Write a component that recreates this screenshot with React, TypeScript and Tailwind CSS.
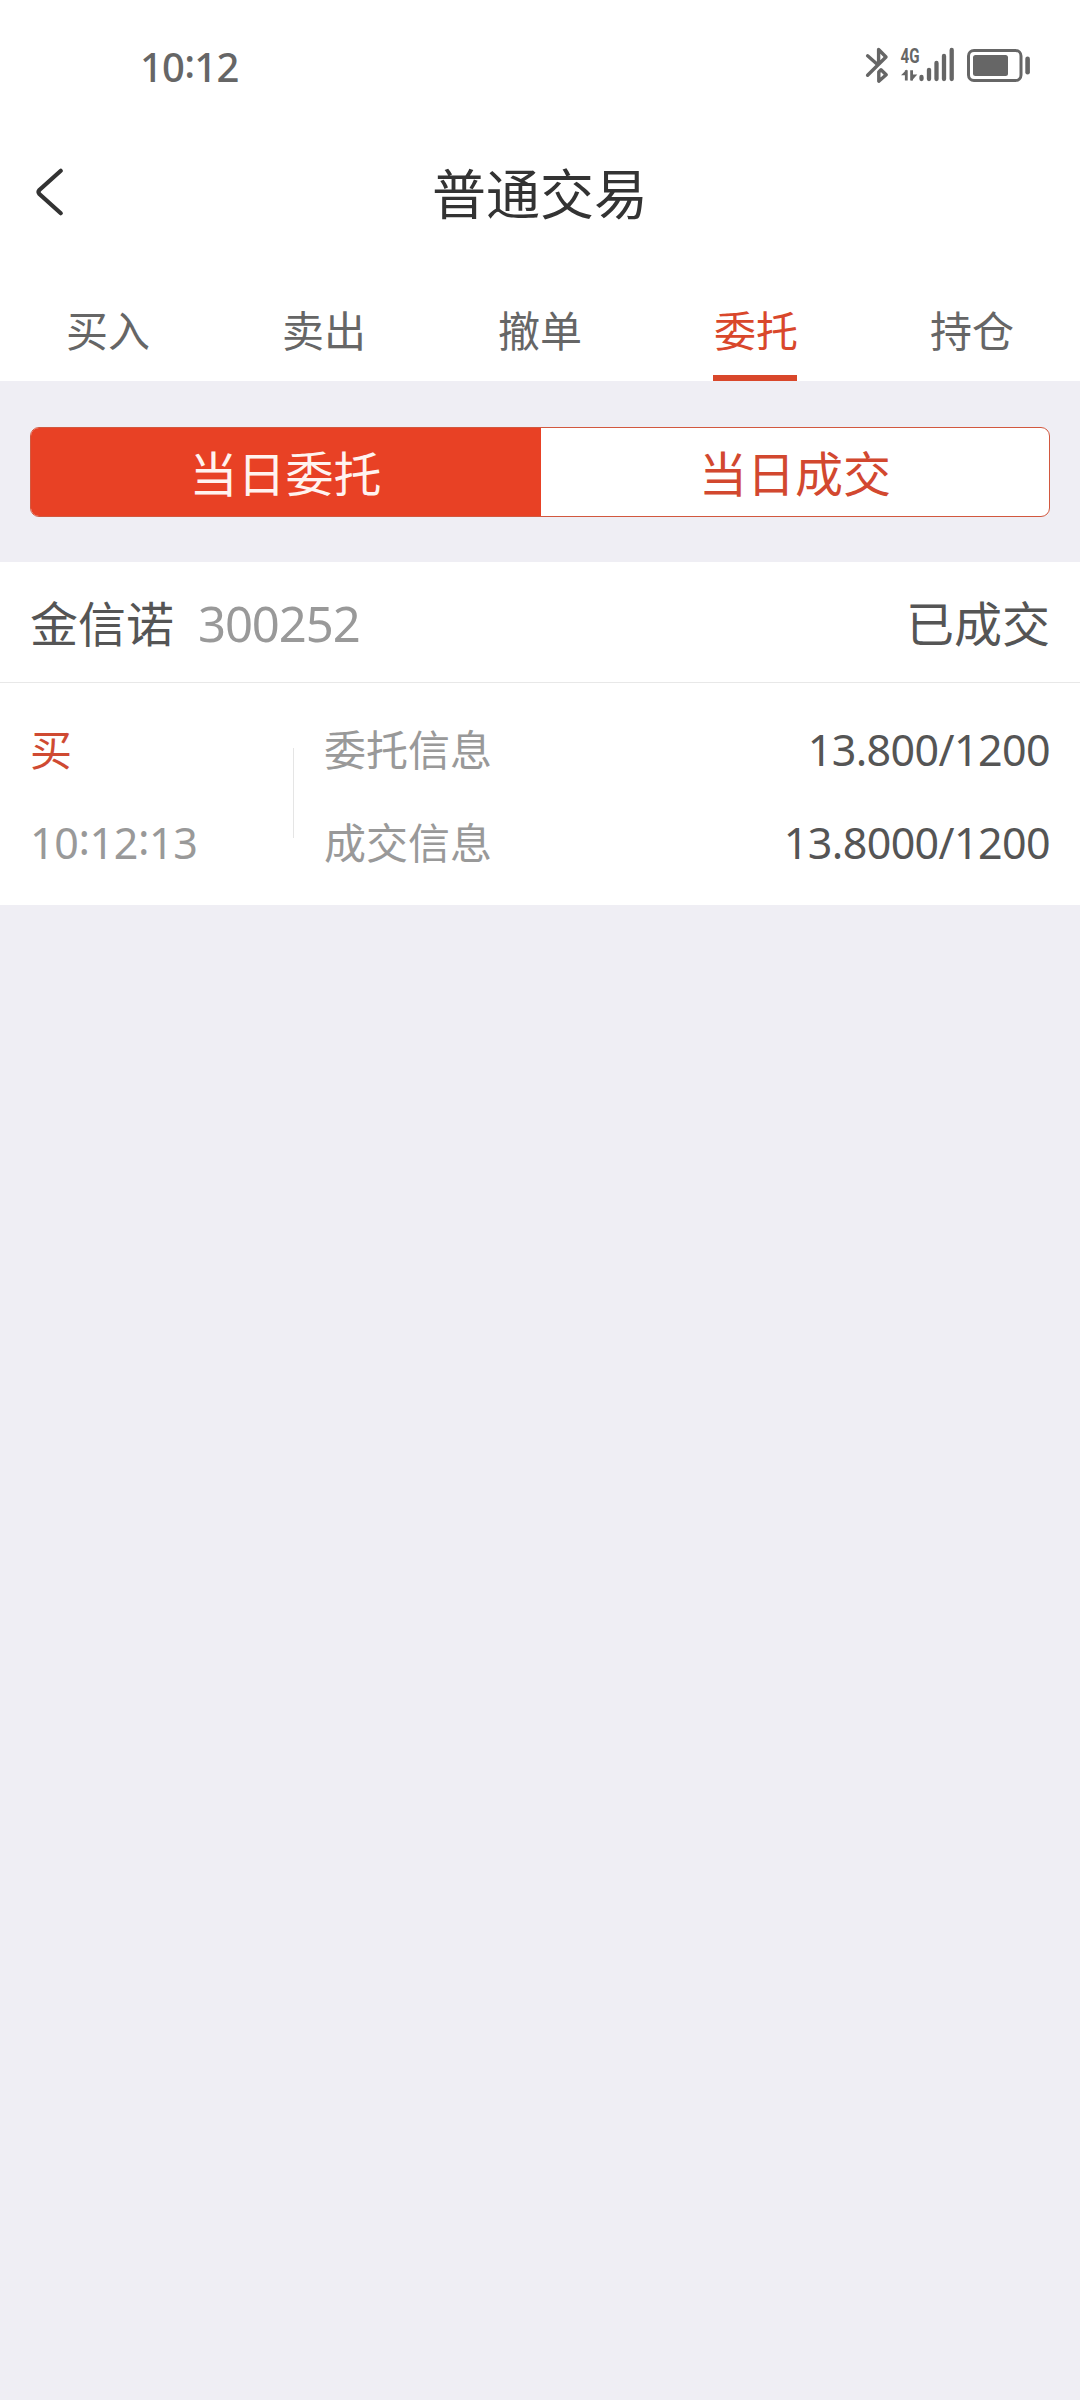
const tabs = ['买入', '卖出', '撤单', '委托', '持仓'];

const details = [
  { label: '委托信息', value: '13.800/1200' },
  { label: '成交信息', value: '13.8000/1200' },
];

/** Clock text with vertically centred colons. */
function Clock({ value, className }: { value: string; className: string }) {
  return (
    <span className={className}>
      {value.split('').map((c, i) =>
        c === ':' ? (
          <span key={i} className="relative -top-[0.09em]">
            :
          </span>
        ) : (
          c
        ),
      )}
    </span>
  );
}

function StatusIcons() {
  return (
    <svg width="172" height="44" viewBox="862 43 172 44" fill="none" stroke="#666" aria-hidden="true">
      <g strokeWidth="3.4" strokeLinecap="round" strokeLinejoin="round">
        <path d="M867.6 55.8 L877.5 64.5" />
        <path d="M867.6 75.2 L886 57 L878.6 49.5 V64" />
        <path d="M881 69.8 L886.2 74.8 L878.8 81.2 V72 Z" />
      </g>
      <text
        x="900.5"
        y="62.5"
        fill="#666"
        stroke="none"
        fontFamily="Roboto, sans-serif"
        fontWeight="700"
        fontSize="20.5"
        textLength="19"
        lengthAdjust="spacingAndGlyphs"
      >
        4G
      </text>
      <path d="M906.8 81 V69.5 L901 75.2 H906" fill="#666" stroke="none" />
      <path d="M906.3 80.6 V70.2 M911.6 70.2 V80.6" strokeWidth="2.8" />
      <path d="M911.5 81 V74.5 H917.3 Z" fill="#666" stroke="none" />
      <g strokeWidth="4.3" strokeLinecap="round">
        <path d="M921.5 77 V79" />
        <path d="M929 69.8 V79" />
        <path d="M936.5 63 V79" />
        <path d="M944 56 V79" />
        <path d="M951.7 50 V79" />
      </g>
      <rect x="968.5" y="50.5" width="52.5" height="30" rx="5.5" strokeWidth="3" />
      <rect x="973" y="55" width="35" height="21" rx="2.5" fill="#666" stroke="none" />
      <rect x="1025.3" y="56.5" width="4.6" height="18" rx="2.3" fill="#666" stroke="none" />
    </svg>
  );
}

export default function App() {
  return (
    <div
      lang="zh-CN"
      className="flex h-[2400px] w-[1080px] flex-col overflow-hidden bg-[#efeef4] font-['Noto_Sans_CJK_SC',sans-serif] whitespace-nowrap"
    >
      <header className="bg-white">
        <div className="flex h-[130px] items-center justify-between pr-[46px] pl-[140px]">
          <Clock
            value="10:12"
            className="pt-[4px] font-['Noto_Sans',sans-serif] text-[40px] leading-[60px] font-medium tracking-[-0.8px] text-[#666]"
          />
          <StatusIcons />
        </div>

        <div className="grid h-[122px] grid-cols-[1fr_auto_1fr] items-center">
          <svg className="mt-[2px] ml-[32px]" width="36" height="54" viewBox="32 165 36 54" fill="none" aria-hidden="true">
            <path
              d="M60.8 170.8 L39.4 190 Q37.6 192 39.4 194 L60.8 213.2"
              stroke="#333"
              strokeWidth="4.2"
              strokeLinecap="round"
            />
          </svg>
          <h1 className="pt-[2px] text-[54px] leading-[78px] text-[#333]">普通交易</h1>
        </div>

        <nav className="grid h-[129px] grid-cols-5">
          {tabs.map((tab) => (
            <div key={tab} className="flex flex-col items-center justify-between pt-[47px]">
              <span className={tab === '委托' ? 'text-[42px] leading-[60px] text-[#d9472b]' : 'text-[42px] leading-[60px] text-[#666]'}>
                {tab}
              </span>
              {tab === '委托' && <span className="mr-[2px] h-[6px] w-[84px] bg-[#d9472b]" />}
            </div>
          ))}
        </nav>
      </header>

      <div className="px-[30px] pt-[46px] pb-[45px]">
        <div className="grid h-[90px] grid-cols-2 overflow-hidden rounded-[9px] border border-[#d2583f] bg-white text-[48px] leading-[86px]">
          <div className="bg-[#e84125] text-center text-[#fff3f0]">当日委托</div>
          <div className="border-l border-[#e84125] text-center text-[#d2482f]">当日成交</div>
        </div>
      </div>

      <section className="bg-white">
        <div className="flex h-[121px] items-start justify-between border-b border-[#e8e8e8] px-[30px] pt-[24px] text-[48px] leading-[70px] text-[#555]">
          <div className="flex gap-[24px]">
            <span>金信诺</span>
            <span className="pt-[2px] font-['Noto_Sans',sans-serif] text-[49px] tracking-[-1.1px] text-[#999]">300252</span>
          </div>
          <span>已成交</span>
        </div>

        <div className="flex h-[222px] pt-[35px] pr-[30px] pl-[30px] text-[42px] leading-[60px]">
          <div className="flex w-[263px] flex-col gap-[33px]">
            <span className="text-[#cf4a32]">买</span>
            <Clock
              value="10:12:13"
              className="pt-[2px] font-['Noto_Sans',sans-serif] text-[43px] tracking-[-0.4px] text-[#999]"
            />
          </div>
          <div className="mt-[30px] h-[90px] w-px bg-[#e5e5e5]" />
          <div className="ml-[30px] flex flex-1 flex-col gap-[33px]">
            {details.map((d) => (
              <div key={d.label} className="flex h-[60px] justify-between">
                <span className="text-[#999]">{d.label}</span>
                <span className="pt-[2px] font-['Noto_Sans',sans-serif] text-[43px] tracking-[-0.6px] text-[#555]">{d.value}</span>
              </div>
            ))}
          </div>
        </div>
      </section>
    </div>
  );
}
